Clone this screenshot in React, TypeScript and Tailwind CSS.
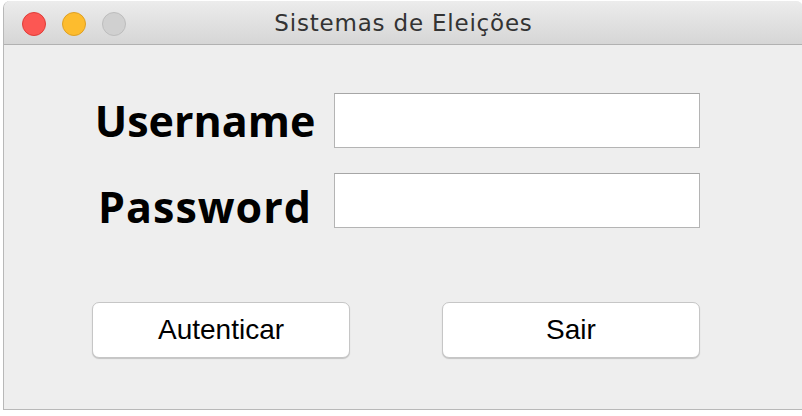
export default function App() {
  return (
    <div className="w-[802px] h-[416px] bg-white overflow-hidden pt-px pl-[3px]">
      <div className="w-[800px] h-[409px] flex flex-col rounded-t-[7px] overflow-hidden border-l border-b border-[#b8b8b8] bg-[#eeeeee]">
        {/* title bar */}
        <div className="relative h-[44px] shrink-0 flex items-center justify-center bg-gradient-to-b from-[#ececec] to-[#d6d6d6] border-b border-[#b1b1b1]">
          <div className="absolute left-[18px] top-[11px] flex gap-[16px]">
            <span className="w-[24px] h-[24px] rounded-full bg-[#fc5753] border border-[#df3d38]" />
            <span className="w-[24px] h-[24px] rounded-full bg-[#fdbc2e] border border-[#dea024]" />
            <span className="w-[24px] h-[24px] rounded-full bg-[#d0d0d0] border border-[#bdbdbd]" />
          </div>
          <span className="text-[23px] tracking-[0.8px] text-[#333333] leading-none pt-px" style={{ fontFamily: '"DejaVu Sans", sans-serif' }}>
            Sistemas de Eleições
          </span>
        </div>

        {/* form */}
        <div className="flex flex-col pt-[48px]">
          <div className="flex flex-col gap-[25px]">
            <div className="flex items-center">
              <label className="w-[328px] pl-[74px] text-center text-[43px] font-bold text-black leading-none" style={{ fontFamily: '"Open Sans", sans-serif' }}>
                Username
              </label>
              <input className="ml-[2px] w-[366px] h-[55px] bg-white border border-[#b4b4b4] border-t-[#a6a6a6] outline-none" />
            </div>
            <div className="flex items-center">
              <label className="w-[328px] pl-[74px] pt-[12px] text-center text-[43px] font-bold tracking-[1px] text-black leading-none" style={{ fontFamily: '"Open Sans", sans-serif' }}>
                Password
              </label>
              <input type="password" className="ml-[2px] w-[366px] h-[55px] bg-white border border-[#b4b4b4] border-t-[#a6a6a6] outline-none" />
            </div>
          </div>

          <div className="flex gap-[92px] pl-[88px] mt-[74px]">
            <button className="w-[258px] h-[56px] bg-white rounded-[7px] border border-[#c6c6c6] shadow-[0_1px_1px_rgba(0,0,0,0.18)] text-[28px] text-black" style={{ fontFamily: '"Liberation Sans", Arial, sans-serif' }}>
              Autenticar
            </button>
            <button className="w-[258px] h-[56px] bg-white rounded-[7px] border border-[#c6c6c6] shadow-[0_1px_1px_rgba(0,0,0,0.18)] text-[28px] text-black" style={{ fontFamily: '"Liberation Sans", Arial, sans-serif' }}>
              Sair
            </button>
          </div>
        </div>
      </div>
    </div>
  )
}
